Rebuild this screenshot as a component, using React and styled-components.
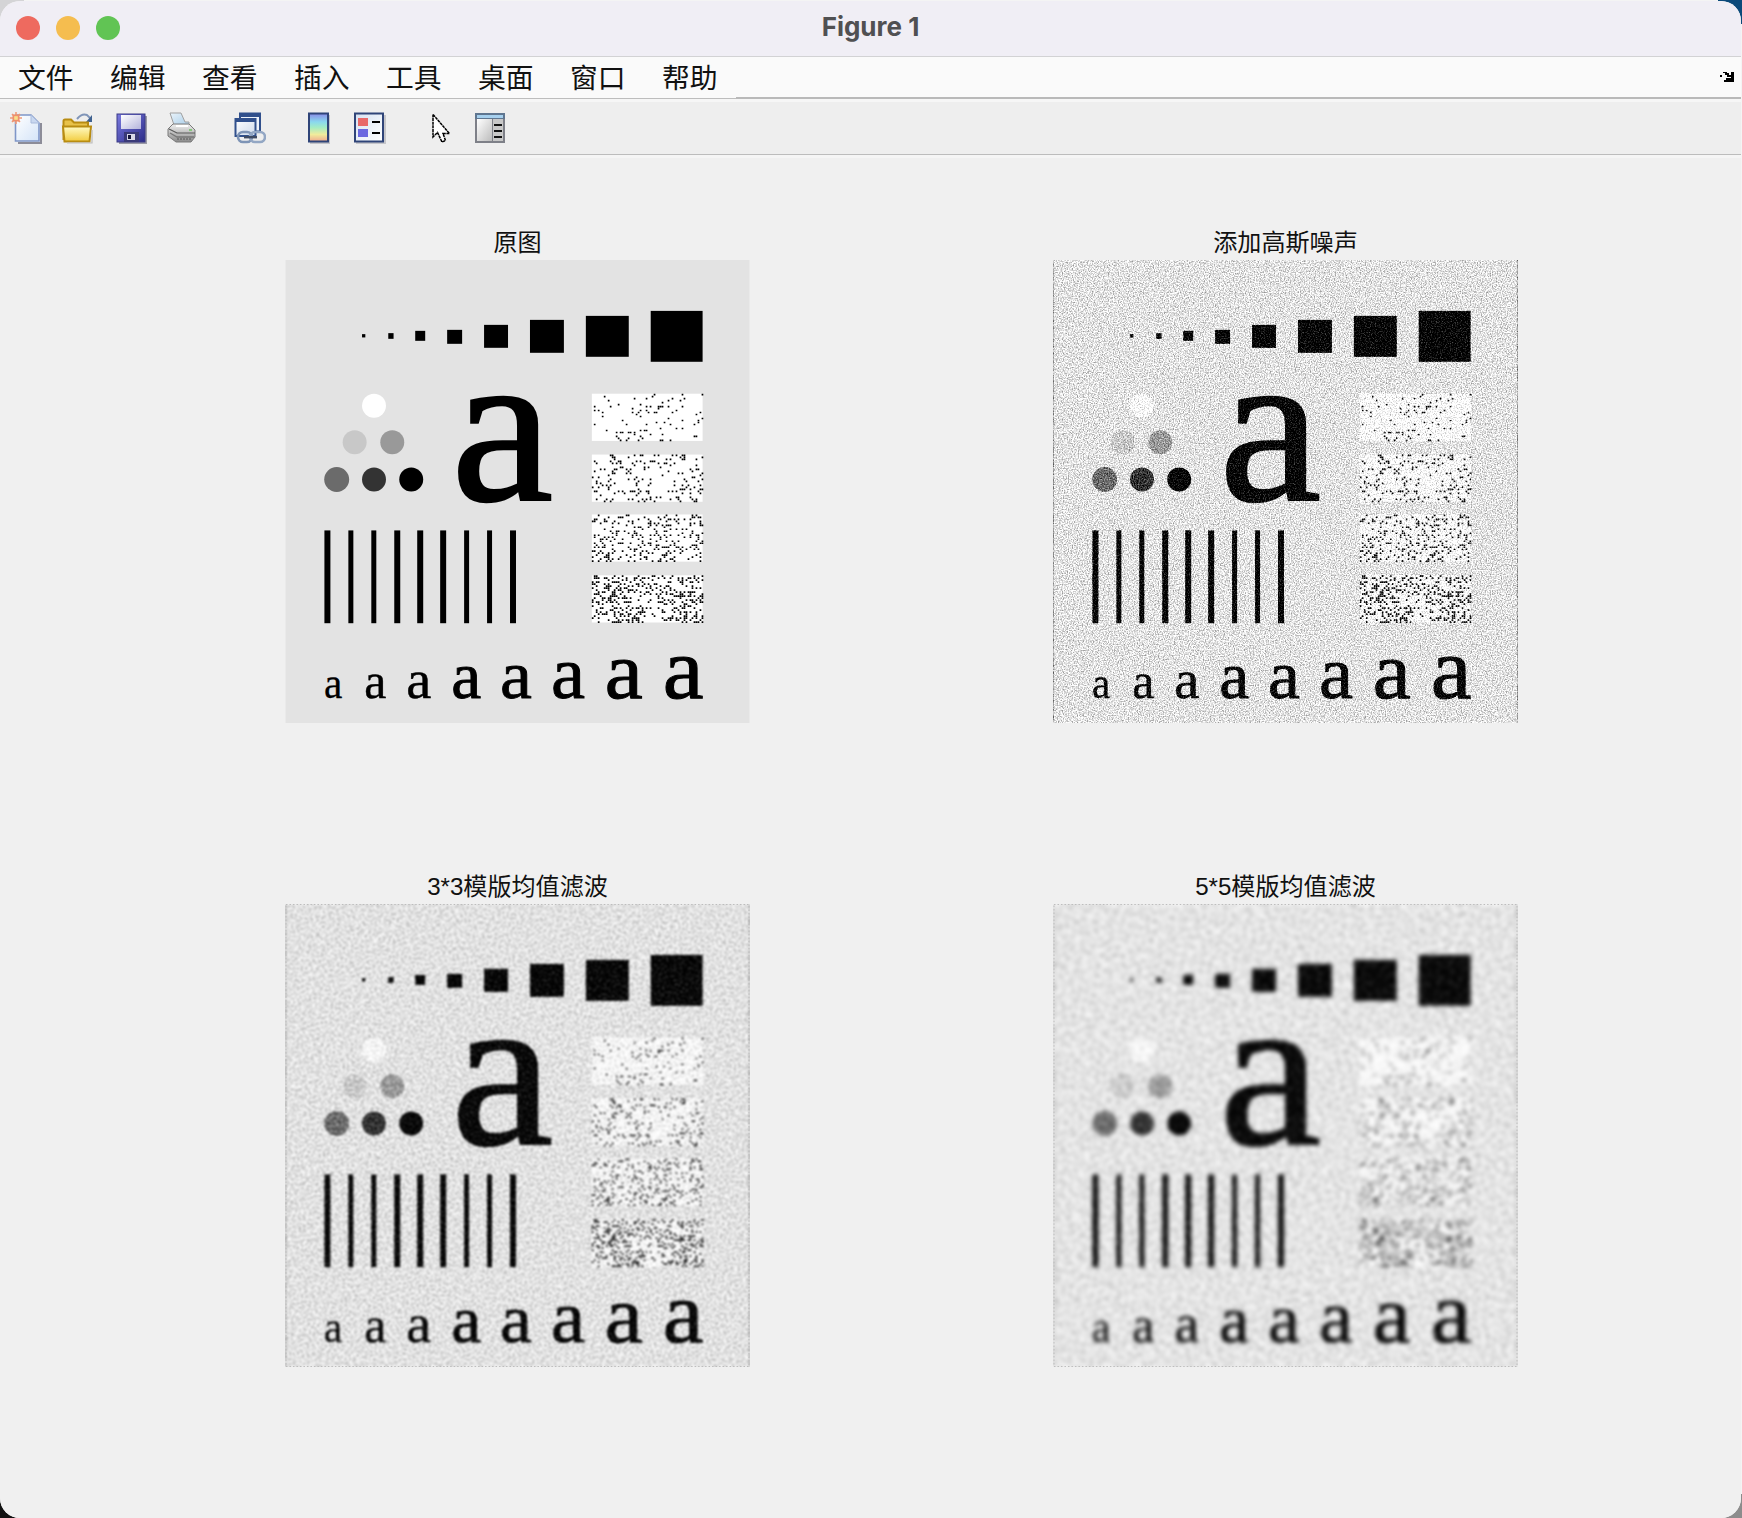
import React from "react";
import styled, { createGlobalStyle } from "styled-components";

const Global = createGlobalStyle`
  html, body { margin: 0; padding: 0; background: #fff; }
`;

const Screen = styled.div`
  width: 1742px;
  height: 1518px;
  box-sizing: border-box;
  padding: 1px 1px 0 0;
  overflow: hidden;
  background:
    linear-gradient(#0b4a7a, #0b4a7a) top right / 24px 24px no-repeat,
    linear-gradient(#d4d4d6, #d4d4d6) top left / 24px 24px no-repeat,
    linear-gradient(#111, #111) bottom left / 24px 24px no-repeat,
    linear-gradient(#8c8c8c, #8c8c8c) bottom right / 24px 24px no-repeat,
    #f4f4f4;
`;

const Win = styled.div`
  height: 100%;
  display: flex;
  flex-direction: column;
  background: #f0f0f0;
  border-radius: 20px;
  overflow: hidden;
`;

const TitleBar = styled.header`
  position: relative;
  height: 55px;
  box-sizing: content-box;
  flex: none;
  display: flex;
  align-items: center;
  justify-content: center;
  background: #f0eef5;
  border-bottom: 1px solid #d2d2d4;
`;

const Lights = styled.div`
  position: absolute;
  left: 16px;
  top: 15px;
  display: flex;
  gap: 16px;
`;

const Light = styled.span`
  width: 24px;
  height: 24px;
  border-radius: 50%;
  background: ${(p) => p.$color};
`;

const TitleText = styled.h1`
  margin: 0 0 3px;
  font: 700 26px/1 Inter, "Liberation Sans", sans-serif;
  color: #505052;
`;

const MenuBar = styled.nav`
  height: 42px;
  flex: none;
  display: flex;
  background: #fafafa;
  position: relative;
`;

const MenuItems = styled.div`
  display: flex;
  border-bottom: 1px solid #bdbdbd;
`;

const MenuItem = styled.span`
  width: 92px;
  box-sizing: border-box;
  padding-left: 18px;
  font: 400 27.8px/38px "Noto Sans CJK SC", sans-serif;
  color: #111;
`;

const MenuRest = styled.div`
  flex: 1;
  border-bottom: 2px solid #b9b9b9;
  display: flex;
  justify-content: flex-end;
  padding: 15px 7px 0 0;
`;

const DockIcon = styled.svg`
  width: 14px;
  height: 10px;
  display: block;
`;

const ToolBar = styled.div`
  height: 52px;
  flex: none;
  box-sizing: content-box;
  padding-top: 3px;
  display: flex;
  align-items: flex-start;
  padding-left: 10px;
  background: linear-gradient(#f6f6f6 3px, #eeeeee 3px);
  border-bottom: 1px solid #bcbcbc;
`;

const ToolIcon = styled.svg`
  width: 32px;
  height: 32px;
  flex: none;
  margin-top: 10px;
  margin-left: ${(p) => p.$gap || 0}px;
`;

const Canvas = styled.main`
  flex: 1;
  display: grid;
  grid-template-columns: 465px 465px;
  grid-auto-rows: 497px;
  column-gap: 303px;
  row-gap: 147px;
  padding: 71px 0 0 285px;
  background: linear-gradient(#f5f5f5 3px, #f0f0f0 3px);
`;

const Axes = styled.section`
  display: flex;
  flex-direction: column;
`;

const AxesTitle = styled.h2`
  height: 34px;
  margin: 0;
  text-align: center;
  font: 400 24.1px/34px "Liberation Sans", "Noto Sans CJK SC", sans-serif;
  color: #111;
`;

const Pattern = styled.svg`
  display: block;
  width: 465px;
  height: 464px;
`;

const Letter = styled.text`
  font-family: "Liberation Serif", serif;
  fill: #000;
  stroke: #000;
  stroke-width: ${(p) => p.$weight}px;
`;

function rng(seed) {
  let a = seed;
  return () => {
    a = (a + 0x6d2b79f5) | 0;
    let t = Math.imul(a ^ (a >>> 15), 1 | a);
    t = (t + Math.imul(t ^ (t >>> 7), 61 | t)) ^ t;
    return ((t ^ (t >>> 14)) >>> 0) / 4294967296;
  };
}

function dots(y, density, seed) {
  const r = rng(seed);
  let d = "";
  for (let row = 0; row < 24; row++) {
    for (let col = 0; col < 56; col++) {
      if (r() < density) {
        d += `M${307 + col * 2} ${y + row * 2}h1.7v1.7h-1.7z`;
      }
    }
  }
  return d;
}

const squares = [
  [76.7, 74.3, 3.3, 3.3], [103, 73.3, 5.3, 5.7], [130, 71, 10, 10], [162, 70, 15, 14],
  [199, 65, 24, 23], [245, 60, 34, 33], [301, 56, 43, 41], [366, 51, 52, 51],
];
const circles = [
  [88.7, 146, 12, "#fff"], [69.3, 182.7, 12, "#c8c8c8"], [107, 182.7, 12, "#999"],
  [51.3, 220, 12.5, "#6b6b6b"], [88.7, 220, 12, "#333"], [126, 220, 12, "#000"],
];
const bars = [[39, 6], [63, 5], [86, 5], [109, 6], [132, 6], [155, 6], [179, 5], [202, 5], [225, 6]];
const speckles = [
  [134, 0.06, 11], [195, 0.12, 22], [255, 0.2, 33], [316, 0.27, 44],
].map(([y, den, s]) => [y, dots(y, den, s)]);
const smallA = [
  [38.5, 44, 0.3, 0.94], [79, 50, 0.4, 1], [121, 55, 0.5, 1.03], [166, 65, 0.9, 1.04],
  [215, 68, 0.8, 1.06], [266, 74, 0.9, 1.04], [320, 81, 1, 1.06], [378, 87, 1, 1.06],
];

const variants = {
  original: null,
  noisy: { seed: 3, freq: 0.8, octaves: 2, gain: 1.6, shift: 0, blur: 0 },
  mean3: { seed: 5, freq: 0.5, octaves: 2, gain: 1.5, shift: 0, blur: 1.15 },
  mean5: { seed: 8, freq: 0.32, octaves: 2, gain: 1.5, shift: -0.012, blur: 2 },
};

function TestPattern({ variant }) {
  const v = variants[variant];
  const fid = `f-${variant}`;
  return (
    <Pattern viewBox="0 0 465 464">
      {v && (
        <defs>
          <filter id={fid} x="0" y="0" width="1" height="1" colorInterpolationFilters="sRGB">
            <feTurbulence type="fractalNoise" baseFrequency={v.freq} numOctaves={v.octaves} seed={v.seed} result="t" />
            <feColorMatrix
              in="t"
              type="matrix"
              values={`${v.gain} 0 0 0 ${0.5 - v.gain / 2}  ${v.gain} 0 0 0 ${0.5 - v.gain / 2}  ${v.gain} 0 0 0 ${0.5 - v.gain / 2}  0 0 0 0 1`}
              result="n"
            />
            <feComposite in="SourceGraphic" in2="n" operator="arithmetic" k1="0" k2="1" k3="0.6" k4={-0.3 - v.shift} result="c" />
            {v.blur > 0 && <feGaussianBlur in="c" stdDeviation={v.blur} />}
          </filter>
        </defs>
      )}
      <g filter={v ? `url(#${fid})` : undefined}>
        <rect width="465" height="464" fill="#e3e3e3" />
        {squares.map(([x, y, w, h]) => (
          <rect key={x} x={x} y={y} width={w} height={h} fill="#000" />
        ))}
        {circles.map(([cx, cy, r, c]) => (
          <circle key={`${cx}${cy}`} cx={cx} cy={cy} r={r} fill={c} />
        ))}
        {bars.map(([x, w]) => (
          <rect key={x} x={x} y="271" width={w} height="93" fill="#000" />
        ))}
        {speckles.map(([y, d]) => (
          <g key={y}>
            <rect x="307" y={y} width="111" height="47.3" fill="#fff" />
            <path d={d} fill="#000" />
          </g>
        ))}
        <Letter transform="translate(166 241) scale(1.05 1)" fontSize="219" $weight={2.4}>a</Letter>
        {smallA.map(([x, s, w, sx]) => (
          <Letter key={x} transform={`translate(${x} 438.5) scale(${sx} 1)`} fontSize={s} $weight={w}>a</Letter>
        ))}
      </g>
      {v && v.blur > 0 && (
        <rect x="0.5" y="0.5" width="464" height="463" fill="none" stroke="#bdbdbd" strokeWidth="1" strokeDasharray="1.5 2" />
      )}
    </Pattern>
  );
}

const NewIcon = (p) => (
  <ToolIcon viewBox="0 0 32 32" {...p}>
    <defs>
      <linearGradient id="g-new" x1="0" y1="0" x2="1" y2="1">
        <stop offset="0" stopColor="#fff" />
        <stop offset="1" stopColor="#d4e4f8" />
      </linearGradient>
    </defs>
    <path d="M31 11V31H8" fill="none" stroke="#8c8c98" strokeWidth="2" />
    <path d="M5.5 3H21L29 11V29H5.5Z" fill="url(#g-new)" stroke="#7f96c8" strokeWidth="1.6" />
    <path d="M21 3V11H29" fill="#c9d8f0" stroke="#a9bbdc" />
    <path d="M6 0V12M0 6H12M2 2L10 10M10 2L2 10" stroke="#ef9a78" strokeWidth="1.6" />
    <rect x="2.5" y="2.5" width="7" height="7" fill="#ef8f6c" />
    <rect x="4.2" y="4.2" width="3.6" height="3.6" fill="#f8e08a" />
  </ToolIcon>
);

const OpenIcon = (p) => (
  <ToolIcon viewBox="0 0 32 32" {...p}>
    <defs>
      <linearGradient id="g-open" x1="0" y1="0" x2="0" y2="1">
        <stop offset="0" stopColor="#fffbc4" />
        <stop offset="1" stopColor="#f2cc3e" />
      </linearGradient>
    </defs>
    <path d="M16 7Q21 1 26 3L29 6" fill="none" stroke="#8095b8" strokeWidth="2" />
    <path d="M31 3V10H25Z" fill="#3f6290" />
    <path d="M2.5 27V9Q2.5 7.5 4 7.5H10L13 10.5H27V27Z" fill="#e8c24a" stroke="#b88c12" strokeWidth="2" />
    <path d="M2 14.5H30L28.5 29.5H3.5Z" fill="url(#g-open)" stroke="#b88c12" strokeWidth="2" />
    <path d="M6 31H31V18" fill="none" stroke="#bdbdbd" strokeWidth="1.2" />
  </ToolIcon>
);

const SaveIcon = (p) => (
  <ToolIcon viewBox="0 0 32 32" {...p}>
    <defs>
      <linearGradient id="g-save" x1="0" y1="0" x2="1" y2="1">
        <stop offset="0" stopColor="#7a7ae0" />
        <stop offset="1" stopColor="#2c2c88" />
      </linearGradient>
      <linearGradient id="g-label" x1="0" y1="0" x2="1" y2="1">
        <stop offset="0" stopColor="#fff" />
        <stop offset="1" stopColor="#b4b4dc" />
      </linearGradient>
    </defs>
    <rect x="3" y="4" width="28" height="28" fill="#9a9aa6" />
    <rect x="1" y="2" width="28" height="28" fill="url(#g-save)" stroke="#3a3a86" />
    <rect x="5" y="3" width="20" height="14" fill="url(#g-label)" />
    <rect x="8" y="20" width="15" height="10" fill="#3a3a78" />
    <rect x="11" y="22" width="8" height="6" fill="#d8d8e6" />
    <rect x="12" y="23" width="3" height="4" fill="#141438" />
  </ToolIcon>
);

const PrintIcon = (p) => (
  <ToolIcon viewBox="0 0 32 32" {...p}>
    <defs>
      <linearGradient id="g-print" x1="0" y1="0" x2="0" y2="1">
        <stop offset="0" stopColor="#f0f0f0" />
        <stop offset="1" stopColor="#8a8a8a" />
      </linearGradient>
      <linearGradient id="g-paper" x1="0" y1="0" x2="1" y2="1">
        <stop offset="0" stopColor="#eaf4fb" />
        <stop offset="1" stopColor="#a9cde8" />
      </linearGradient>
    </defs>
    <path d="M3 1H14L18 10H22V13H7Z" fill="url(#g-paper)" stroke="#a0a0a0" />
    <path d="M6 12H22L28 18V25L24 30H9L1 24V17Z" fill="url(#g-print)" stroke="#7a7a7a" strokeWidth="1" />
    <path d="M2 17L10 21H28" stroke="#5a5a5a" strokeWidth="1.2" fill="none" />
    <path d="M3 21L10 25H27" stroke="#777" strokeWidth="1.4" fill="none" />
    <path d="M9 14H21" stroke="#fff" strokeWidth="2" />
    <path d="M10 27H24" stroke="#555" strokeWidth="1" strokeDasharray="2 1" />
    <rect x="22" y="17" width="3" height="2" fill="#86c67c" />
  </ToolIcon>
);

const LinkIcon = (p) => (
  <ToolIcon viewBox="0 0 32 32" {...p}>
    <defs>
      <linearGradient id="g-link" x1="0" y1="0" x2="1" y2="1">
        <stop offset="0" stopColor="#fff" />
        <stop offset="1" stopColor="#cdd9ea" />
      </linearGradient>
    </defs>
    <rect x="6" y="1.5" width="20" height="18" fill="#eef3fa" stroke="#31508c" strokeWidth="2" />
    <rect x="6" y="1" width="20" height="4" fill="#31508c" />
    <rect x="1.5" y="7" width="20" height="17" fill="url(#g-link)" stroke="#31508c" strokeWidth="2" />
    <rect x="1" y="6" width="21" height="4" fill="#31508c" />
    <rect x="4" y="20" width="14" height="10" rx="5" fill="none" stroke="#7e94b6" strokeWidth="2.6" />
    <rect x="16" y="20" width="15" height="10" rx="5" fill="none" stroke="#93a7c4" strokeWidth="2.6" />
    <rect x="10" y="24" width="13" height="2.4" fill="#3e4a62" />
  </ToolIcon>
);

const BarIcon = (p) => (
  <ToolIcon viewBox="0 0 32 32" {...p}>
    <defs>
      <linearGradient id="g-bar" x1="0" y1="0" x2="0" y2="1">
        <stop offset="0" stopColor="#8a8ae6" />
        <stop offset="0.3" stopColor="#8ad8ee" />
        <stop offset="0.5" stopColor="#a4ecc4" />
        <stop offset="0.75" stopColor="#f0ec9c" />
        <stop offset="1" stopColor="#f0a88e" />
      </linearGradient>
    </defs>
    <rect x="8" y="3" width="20" height="29" fill="#c4c4c8" />
    <rect x="7" y="1.5" width="19" height="28" fill="url(#g-bar)" stroke="#2f4478" strokeWidth="2" />
  </ToolIcon>
);

const LegendIcon = (p) => (
  <ToolIcon viewBox="0 0 32 32" {...p}>
    <defs>
      <linearGradient id="g-leg" x1="0" y1="0" x2="1" y2="1">
        <stop offset="0" stopColor="#d6e2f2" />
        <stop offset="1" stopColor="#fff" />
      </linearGradient>
    </defs>
    <rect x="2" y="3" width="30" height="29" fill="#c6c6ca" />
    <rect x="1" y="1.5" width="28" height="28" fill="url(#g-leg)" stroke="#2f4478" strokeWidth="2" />
    <rect x="4" y="6" width="10" height="8" fill="#e8696a" />
    <rect x="4" y="17" width="10" height="8" fill="#6a68e0" />
    <rect x="18" y="9" width="8" height="2" fill="#000" />
    <rect x="18" y="20" width="8" height="2" fill="#000" />
  </ToolIcon>
);

const CursorIcon = (p) => (
  <ToolIcon viewBox="0 0 32 32" {...p}>
    <path
      d="M8 2.5V25L12.5 20.5L17 30L20.5 28.5L18 21.5H24.5Z"
      fill="#fff"
      stroke="#000"
      strokeWidth="1.5"
      strokeDasharray="3 0.6"
    />
  </ToolIcon>
);

const PanelIcon = (p) => (
  <ToolIcon viewBox="0 0 32 32" {...p}>
    <defs>
      <linearGradient id="g-pan" x1="0" y1="0" x2="1" y2="1">
        <stop offset="0" stopColor="#fff" />
        <stop offset="1" stopColor="#bcbcbc" />
      </linearGradient>
    </defs>
    <rect x="1" y="1" width="30" height="30" fill="#7e8088" />
    <rect x="1" y="1" width="30" height="6" fill="#5f7690" />
    <rect x="3" y="3" width="26" height="3" fill="#a6d0ee" />
    <rect x="3" y="7" width="15" height="22" fill="url(#g-pan)" />
    <rect x="19" y="7" width="10" height="22" fill="#c8c8c8" />
    <rect x="20" y="12" width="8" height="2" fill="#111" />
    <rect x="20" y="18" width="8" height="2" fill="#111" />
    <rect x="20" y="24" width="8" height="2" fill="#111" />
  </ToolIcon>
);

const menus = ["文件", "编辑", "查看", "插入", "工具", "桌面", "窗口", "帮助"];

export default function App() {
  return (
    <Screen>
      <Global />
      <Win>
        <TitleBar>
          <Lights>
            <Light $color="#ee6a5f" />
            <Light $color="#f5bd4f" />
            <Light $color="#61c454" />
          </Lights>
          <TitleText>Figure 1</TitleText>
        </TitleBar>
        <MenuBar>
          <MenuItems>
            {menus.map((m) => (
              <MenuItem key={m}>{m}</MenuItem>
            ))}
          </MenuItems>
          <MenuRest>
            <DockIcon viewBox="0 0 14 10">
              <path d="M0 3h2v2H0zM3 0h4v1H3zM5 1h4v2H5zM7 3h4v2H7zM11 0h3v10H4V8h2V6h5z" fill="#000" />
            </DockIcon>
          </MenuRest>
        </MenuBar>
        <ToolBar>
          <NewIcon />
          <OpenIcon $gap={19} />
          <SaveIcon $gap={23} />
          <PrintIcon $gap={19} />
          <LinkIcon $gap={35} />
          <BarIcon $gap={36} />
          <LegendIcon $gap={20} />
          <CursorIcon $gap={39} />
          <PanelIcon $gap={17} />
        </ToolBar>
        <Canvas>
          <Axes>
            <AxesTitle>原图</AxesTitle>
            <TestPattern variant="original" />
          </Axes>
          <Axes>
            <AxesTitle>添加高斯噪声</AxesTitle>
            <TestPattern variant="noisy" />
          </Axes>
          <Axes>
            <AxesTitle>3*3模版均值滤波</AxesTitle>
            <TestPattern variant="mean3" />
          </Axes>
          <Axes>
            <AxesTitle>5*5模版均值滤波</AxesTitle>
            <TestPattern variant="mean5" />
          </Axes>
        </Canvas>
      </Win>
    </Screen>
  );
}
